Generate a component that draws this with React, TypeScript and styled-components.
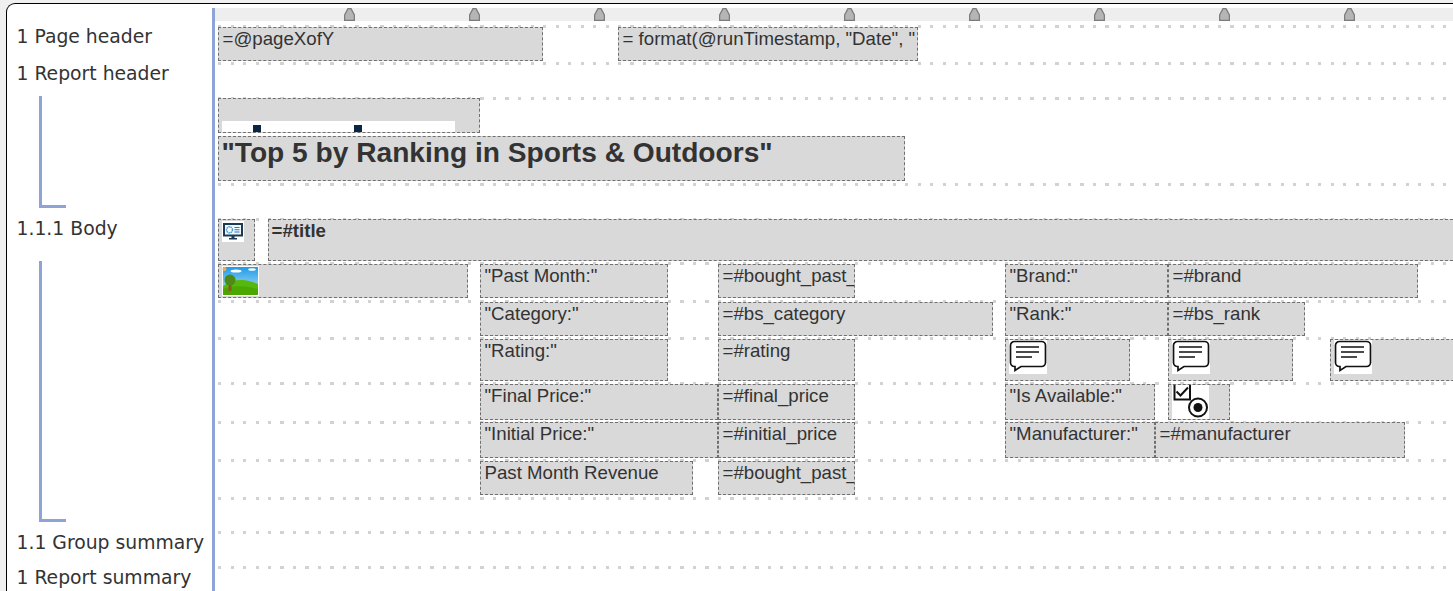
import React from "react";
import styled, { createGlobalStyle } from "styled-components";

const Global = createGlobalStyle`
  html, body { margin: 0; padding: 0; background: #f0f0f0; overflow: hidden; }
  #root { width: 1453px; height: 591px; overflow: hidden; }
`;

const Frame = styled.div`
  margin: 3px 0 0 6px;
  width: 1500px;
  height: 640px;
  box-sizing: border-box;
  background: #fff;
  border: 1px solid #000;
  border-width: 1.5px 0 0 1.5px;
  border-top-left-radius: 9px;
  display: flex;
  padding-top: 3.5px;
`;

const Sidebar = styled.aside`
  width: 204.5px;
  flex: none;
  padding-top: 18px;
  border-right: 3px solid #8fa3d6;
  display: flex;
  flex-direction: column;
  font-family: "DejaVu Sans", Verdana, sans-serif;
  font-size: 18.8px;
  color: #333;
`;

const SectionLabel = styled.div<{ $height: number; $top?: number }>`
  box-sizing: border-box;
  height: ${(p) => p.$height}px;
  padding: ${(p) => p.$top ?? 0}px 0 0 9.5px;
  line-height: 22px;
  white-space: nowrap;
`;

const Bracket = styled.div<{ $height: number }>`
  box-sizing: border-box;
  height: ${(p) => p.$height}px;
  width: 27px;
  margin-left: 31.5px;
  border-left: 3px solid #8fa3d6;
  border-bottom: 3px solid #8fa3d6;
`;

const Canvas = styled.main`
  flex: 1;
  display: flex;
  flex-direction: column;
  min-width: 0;
`;

const Ruler = styled.div`
  height: 13px;
  background: #eeeeee;
  padding-left: 129px;
  display: flex;
  gap: 114px;
  margin-bottom: 5px;
  flex: none;
`;

const Band = styled.section<{ $height: number; $top?: number }>`
  position: relative;
  box-sizing: border-box;
  height: ${(p) => p.$height}px;
  padding: ${(p) => p.$top ?? 1}px 0 0 3px;
  flex: none;
  &::before {
    content: "";
    position: absolute;
    left: 3px;
    right: 0;
    top: -1px;
    height: 3px;
    background: repeating-linear-gradient(90deg, #d2d2d2 0 3px, transparent 3px 12.5px);
  }
`;

const BandRow = styled(Band)<{ $gap: number }>`
  display: flex;
  align-items: flex-start;
  gap: ${(p) => p.$gap}px;
`;

const BandStack = styled(Band)`
  display: flex;
  flex-direction: column;
  gap: 3px;
`;

const DetailRow = styled(Band)`
  display: grid;
  grid-template-columns: 262px 238px 287px 163px 1fr;
  align-items: start;
`;

const Slot = styled.div<{ $col: number }>`
  grid-column: ${(p) => p.$col};
`;

const WideSlot = styled.div<{ $col: number; $gap?: number }>`
  grid-column: ${(p) => p.$col} / -1;
  display: flex;
  align-items: flex-start;
  gap: ${(p) => p.$gap ?? 0}px;
`;

const Field = styled.div<{ $w: number; $h: number; $size?: number; $bold?: boolean }>`
  position: relative;
  flex: none;
  width: ${(p) => p.$w}px;
  height: ${(p) => p.$h}px;
  box-sizing: border-box;
  background: #d9d9d9;
  border: 1px dashed #6f6f6f;
  padding: 0 0 0 3px;
  overflow: hidden;
  white-space: nowrap;
  font-family: "Liberation Sans", Arial, sans-serif;
  font-size: ${(p) => p.$size ?? 18.67}px;
  font-weight: ${(p) => (p.$bold ? 700 : 400)};
  color: #333;
`;

const FieldText = styled.span`
  display: block;
  padding-left: 1px;
`;

const BoldText = styled.span`
  display: block;
`;

const BarStrip = styled.div`
  margin-top: 22px;
  width: 233px;
  height: 12px;
  background: #fff;
  display: flex;
  align-items: flex-end;
  gap: 93px;
  padding: 0 0 1px 31px;
  box-sizing: border-box;
`;

const BarDot = styled.span`
  width: 8px;
  height: 7px;
  background: #0b2545;
`;

const Picture = styled.svg`
  display: block;
  background: #fff;
`;

const OffsetPicture = styled(Picture)`
  margin-top: 1px;
`;

const RulerMark = () => (
  <svg width="11" height="13" viewBox="0 0 11 13">
    <path d="M4 .6h3L10.400 7v5.400H.6V7z" fill="#b5b5b5" stroke="#7c7c7c" strokeWidth="1.300" />
  </svg>
);

const MonitorIcon = () => (
  <OffsetPicture width="22" height="21" viewBox="0 0 22 21">
    <rect x="2" y="3" width="18" height="11.500" fill="#eef7fc" stroke="#1d3a55" strokeWidth="2" />
    <circle cx="7.500" cy="8.800" r="3" fill="none" stroke="#4a9ad4" strokeWidth="1.400" strokeDasharray="1.500 .6" />
    <path d="M12.500 6.500h5M12.500 8.800h5M12.500 11h5" stroke="#2d78b5" strokeWidth="1.100" />
    <path d="M9.500 15h3v2h2.500v1.500H7V17h2.500z" fill="#1d3a55" />
  </OffsetPicture>
);

const LandscapeIcon = () => (
  <OffsetPicture width="37" height="30" viewBox="0 0 37 30">
    <defs>
      <linearGradient id="sky" x1="0" y1="0" x2="0" y2="1">
        <stop offset="0" stopColor="#1f9be8" />
        <stop offset="1" stopColor="#bfe6f5" />
      </linearGradient>
    </defs>
    <rect x="1" y="1" width="35" height="28" fill="url(#sky)" />
    <ellipse cx="14" cy="5" rx="5.500" ry="1.600" fill="#fff" />
    <ellipse cx="30" cy="3.500" rx="3.800" ry="1.300" fill="#fff" />
    <circle cx="2.500" cy="3" r="2" fill="#f4ad4a" />
    <path d="M1 20c8-6 18-7 26-5 4 1 7 2 9 3v11H1z" fill="#56b80c" />
    <path d="M1 23c10-4 22-3 35 0v6H1z" fill="#4aa800" />
    <path d="M6.500 15h3v10h-3z" fill="#8a5a22" />
    <ellipse cx="8" cy="14" rx="5.500" ry="5.500" fill="#4d8a16" />
    <path d="M4 25l2 1" stroke="#c05030" strokeWidth="1" />
  </OffsetPicture>
);

const CommentIcon = () => (
  <Picture width="38" height="34" viewBox="0 0 38 34">
    <path
      d="M5.500 1.500h27a4 4 0 0 1 4 4v17a4 4 0 0 1-4 4H12l-6 4v-4h-.5a4 4 0 0 1-4-4v-17a4 4 0 0 1 4-4z"
      fill="#fff"
      stroke="#111"
      strokeWidth="1.700"
    />
    <path d="M7 7h23M7 12h23M7 17h16" stroke="#111" strokeWidth="1.600" />
  </Picture>
);

const OptionIcon = () => (
  <Picture width="37" height="36" viewBox="0 0 37 36">
    <path d="M2.500 0v14.500h15.500V0" fill="none" stroke="#111" strokeWidth="2" />
    <path d="M4.500 6.500l4 4 7.500-8" fill="none" stroke="#111" strokeWidth="2" />
    <circle cx="26" cy="22.500" r="9" fill="#fff" stroke="#111" strokeWidth="2" />
    <circle cx="26" cy="22.500" r="4.500" fill="#111" />
  </Picture>
);

const marks = [0, 1, 2, 3, 4, 5, 6, 7, 8, 9];

export default function App() {
  return (
    <>
      <Global />
      <Frame>
        <Sidebar>
          <SectionLabel $height={37}>1 Page header</SectionLabel>
          <SectionLabel $height={33}>1 Report header</SectionLabel>
          <Bracket $height={112} />
          <SectionLabel $height={53} $top={10}>1.1.1 Body</SectionLabel>
          <Bracket $height={261} />
          <SectionLabel $height={45} $top={10}>1.1 Group summary</SectionLabel>
          <SectionLabel $height={24}>1 Report summary</SectionLabel>
        </Sidebar>
        <Canvas>
          <Ruler>
            {marks.map((m) => (
              <RulerMark key={m} />
            ))}
          </Ruler>
          <BandRow $height={37} $gap={75}>
            <Field $w={325} $h={34}><FieldText>=@pageXofY</FieldText></Field>
            <Field $w={300} $h={34}><FieldText>= format(@runTimestamp, "Date", "</FieldText></Field>
          </BandRow>
          <Band $height={35} />
          <BandStack $height={86} $top={0}>
            <Field $w={262} $h={35}>
              <BarStrip>
                <BarDot />
                <BarDot />
              </BarStrip>
            </Field>
            <Field $w={687} $h={45} $size={28.13} $bold><BoldText>"Top 5 by Ranking in Sports &amp; Outdoors"</BoldText></Field>
          </BandStack>
          <Band $height={35} />
          <BandRow $height={44} $gap={13} $top={0}>
            <Field $w={37} $h={42}><MonitorIcon /></Field>
            <Field $w={1200} $h={42} $bold><BoldText>=#title</BoldText></Field>
          </BandRow>
          <DetailRow $height={38}>
            <Slot $col={1}><Field $w={250} $h={34}><LandscapeIcon /></Field></Slot>
            <Slot $col={2}><Field $w={188} $h={34}><FieldText>"Past Month:"</FieldText></Field></Slot>
            <Slot $col={3}><Field $w={137} $h={34}><FieldText>=#bought_past_</FieldText></Field></Slot>
            <Slot $col={4}><Field $w={163} $h={34}><FieldText>"Brand:"</FieldText></Field></Slot>
            <Slot $col={5}><Field $w={250} $h={34}><FieldText>=#brand</FieldText></Field></Slot>
          </DetailRow>
          <DetailRow $height={37}>
            <Slot $col={2}><Field $w={188} $h={34}><FieldText>"Category:"</FieldText></Field></Slot>
            <Slot $col={3}><Field $w={275} $h={34}><FieldText>=#bs_category</FieldText></Field></Slot>
            <Slot $col={4}><Field $w={163} $h={34}><FieldText>"Rank:"</FieldText></Field></Slot>
            <Slot $col={5}><Field $w={137} $h={34}><FieldText>=#bs_rank</FieldText></Field></Slot>
          </DetailRow>
          <DetailRow $height={45}>
            <Slot $col={2}><Field $w={188} $h={42}><FieldText>"Rating:"</FieldText></Field></Slot>
            <Slot $col={3}><Field $w={137} $h={42}><FieldText>=#rating</FieldText></Field></Slot>
            <Slot $col={4}><Field $w={125} $h={42}><CommentIcon /></Field></Slot>
            <WideSlot $col={5} $gap={37}>
              <Field $w={125} $h={42}><CommentIcon /></Field>
              <Field $w={200} $h={42}><CommentIcon /></Field>
            </WideSlot>
          </DetailRow>
          <DetailRow $height={39}>
            <Slot $col={2}><Field $w={238} $h={36}><FieldText>"Final Price:"</FieldText></Field></Slot>
            <Slot $col={3}><Field $w={137} $h={36}><FieldText>=#final_price</FieldText></Field></Slot>
            <Slot $col={4}><Field $w={150} $h={36}><FieldText>"Is Available:"</FieldText></Field></Slot>
            <Slot $col={5}><Field $w={62} $h={36}><OptionIcon /></Field></Slot>
          </DetailRow>
          <DetailRow $height={38} $top={0}>
            <Slot $col={2}><Field $w={238} $h={36}><FieldText>"Initial Price:"</FieldText></Field></Slot>
            <Slot $col={3}><Field $w={137} $h={36}><FieldText>=#initial_price</FieldText></Field></Slot>
            <WideSlot $col={4}>
              <Field $w={150} $h={36}><FieldText>"Manufacturer:"</FieldText></Field>
              <Field $w={250} $h={36}><FieldText>=#manufacturer</FieldText></Field>
            </WideSlot>
          </DetailRow>
          <DetailRow $height={38}>
            <Slot $col={2}><Field $w={213} $h={34}><FieldText>Past Month Revenue</FieldText></Field></Slot>
            <Slot $col={3}><Field $w={137} $h={34}><FieldText>=#bought_past_</FieldText></Field></Slot>
          </DetailRow>
          <Band $height={34} />
          <Band $height={35} />
          <Band $height={24} />
        </Canvas>
      </Frame>
    </>
  );
}
